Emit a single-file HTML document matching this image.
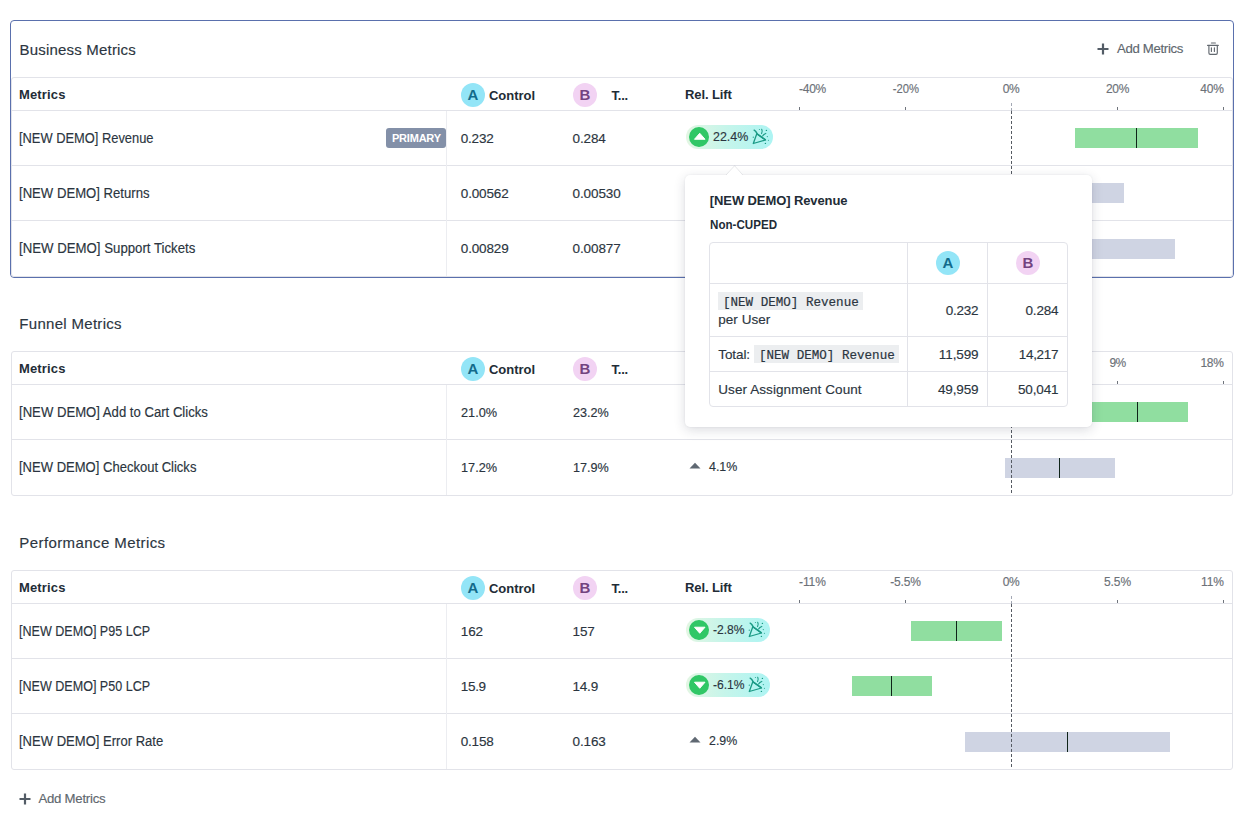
<!DOCTYPE html>
<html><head><meta charset="utf-8"><style>
html,body{margin:0;padding:0;background:#fff;}
body{width:1246px;height:830px;overflow:hidden;position:relative;font-family:"Liberation Sans",sans-serif;}
.t{position:absolute;line-height:1;white-space:nowrap;-webkit-text-stroke:0.15px currentColor;}
.a{position:absolute;box-sizing:border-box;}
svg{position:absolute;overflow:visible;}
</style></head><body>
<div class="a" style="left:10px;top:20px;width:1224px;height:258px;border:1px solid #5a70ad;border-radius:4px;"></div>
<div class="t" style="top:42.00px;font-size:15px;color:#2c3641;letter-spacing:0.196px;left:19.5px;">Business Metrics</div>
<svg style="left:1097px;top:43px" width="12" height="12" viewBox="0 0 12 12"><path d="M6 0.5 V11.5 M0.5 6 H11.5" stroke="#535c66" stroke-width="2.2"/></svg>
<div class="t" style="top:41.82px;font-size:13.2px;color:#60676e;letter-spacing:-0.311px;left:1116.9px;">Add Metrics</div>
<svg style="left:1206px;top:41px" width="14" height="14" viewBox="0 0 14 14"><path d="M5.4 2 H9.4 M1.6 4.4 H12.3 M2.9 4.6 V12 Q2.9 13.3 4.2 13.3 H10 Q11.3 13.3 11.3 12 V4.6 M5.4 6.7 V10.4 M8.4 6.7 V10.4" fill="none" stroke="#62686f" stroke-width="1.15" stroke-linecap="round"/></svg>
<div class="a" style="left:11px;top:77px;width:1222px;height:200px;border:1px solid #e2e3e9;border-radius:3px;"></div>
<div class="a" style="left:11px;top:110px;width:1222px;height:1px;background:#e2e3e9;"></div>
<div class="a" style="left:11px;top:165px;width:1222px;height:1px;background:#e2e3e9;"></div>
<div class="a" style="left:11px;top:220px;width:1222px;height:1px;background:#e2e3e9;"></div>
<div class="a" style="left:446px;top:111px;width:1px;height:165px;background:#ecedf1;"></div>
<div class="t" style="top:87.99px;font-size:13px;color:#222c36;font-weight:700;-webkit-text-stroke:0;letter-spacing:0.14px;left:19px;">Metrics</div>
<div class="a" style="left:461px;top:83px;width:24px;height:24px;border-radius:50%;background:#93e5f7;"></div>
<div class="t" style="top:87.10px;font-size:15px;color:#136b8b;font-weight:700;-webkit-text-stroke:0;left:273px;width:400px;text-align:center;">A</div>
<div class="t" style="top:89.29px;font-size:13px;color:#222c36;font-weight:700;-webkit-text-stroke:0;letter-spacing:-0.03px;left:489px;">Control</div>
<div class="a" style="left:573px;top:83px;width:24px;height:24px;border-radius:50%;background:#f2d3f3;"></div>
<div class="t" style="top:87.10px;font-size:15px;color:#734380;font-weight:700;-webkit-text-stroke:0;left:385px;width:400px;text-align:center;">B</div>
<div class="t" style="top:89.29px;font-size:13px;color:#222c36;font-weight:700;-webkit-text-stroke:0;letter-spacing:-0.209px;left:611.5px;">T...</div>
<div class="t" style="top:87.99px;font-size:13px;color:#222c36;font-weight:700;-webkit-text-stroke:0;letter-spacing:-0.096px;left:685px;">Rel. Lift</div>
<div class="t" style="top:82.84px;font-size:12px;color:#6c7178;letter-spacing:-0.253px;left:799px;">-40%</div>
<div class="t" style="top:82.84px;font-size:12px;color:#6c7178;left:705.5px;width:400px;text-align:center;transform:scaleX(0.9388);transform-origin:center top;">-20%</div>
<div class="t" style="top:82.84px;font-size:12px;color:#6c7178;letter-spacing:-0.322px;left:811px;width:400px;text-align:center;">0%</div>
<div class="t" style="top:82.84px;font-size:12px;color:#6c7178;letter-spacing:-0.339px;left:917.5px;width:400px;text-align:center;">20%</div>
<div class="t" style="top:82.84px;font-size:12px;color:#6c7178;letter-spacing:-0.106px;right:22.106px;">40%</div>
<div class="a" style="left:799px;top:107px;width:1px;height:3px;background:#6f747c;"></div>
<div class="a" style="left:905px;top:107px;width:1px;height:3px;background:#6f747c;"></div>
<div class="a" style="left:1117px;top:107px;width:1px;height:3px;background:#6f747c;"></div>
<div class="a" style="left:1223px;top:107px;width:1px;height:3px;background:#6f747c;"></div>
<div class="t" style="top:131.14px;font-size:14px;color:#2b3540;left:19px;transform:scaleX(0.9196);transform-origin:left top;">[NEW DEMO] Revenue</div>
<div class="t" style="top:131.57px;font-size:13.5px;color:#2b3540;letter-spacing:-0.217px;left:460.8px;">0.232</div>
<div class="t" style="top:131.57px;font-size:13.5px;color:#2b3540;letter-spacing:-0.157px;left:572.6px;">0.284</div>
<div class="a" style="left:685.5px;top:125px;width:87.5px;height:23.5px;border-radius:12px;background:linear-gradient(to right,#e3f6e3,#c6f5ea 45%,#adf4f3);"></div>
<div class="a" style="left:689.2px;top:127px;width:19.8px;height:19.8px;border-radius:50%;background:#30c766;"></div>
<svg style="left:689.5px;top:127.2px" width="19.5" height="19.5" viewBox="0 0 20 20"><path d="M4.6 12.6 L10 6.4 L15.4 12.6 Z" fill="#fff" stroke="#fff" stroke-width="1" stroke-linejoin="round"/></svg>
<div class="t" style="top:130.37px;font-size:13.5px;color:#2b3540;left:712.9px;transform:scaleX(0.9222);transform-origin:left top;">22.4%</div>
<svg style="left:748.9px;top:125px" width="24" height="24" viewBox="0 0 24 24"><path d="M4.3 18.5 L7.8 8.8 L16.5 15 Z" fill="none" stroke="#1a9a85" stroke-width="1.3" stroke-linejoin="round"/><path d="M5.2 5.2 Q6.9 6.1 8.2 8.9 M8.4 9.2 L16.2 14.6" fill="none" stroke="#1a9a85" stroke-width="1.5" stroke-linecap="round"/><path d="M12.7 4.3 Q13.8 6.2 12.6 8.6" fill="none" stroke="#1a9a85" stroke-width="1.1" stroke-linecap="round"/><path d="M16.8 8.4 Q14.6 9.1 13.6 10.9" fill="none" stroke="#1a9a85" stroke-width="1.1" stroke-linecap="round"/><circle cx="17.4" cy="5.4" r=".7" fill="#1a9a85"/><circle cx="4.3" cy="12.2" r=".6" fill="#1a9a85"/><circle cx="18.3" cy="11.6" r=".55" fill="#1a9a85"/><circle cx="19.4" cy="15.3" r=".55" fill="#1a9a85"/><circle cx="16.4" cy="18.4" r=".7" fill="#1a9a85"/><circle cx="10.4" cy="4.4" r=".5" fill="#1a9a85"/></svg>
<div class="a" style="left:1075px;top:128px;width:123px;height:20px;background:#90dea0;"></div>
<div class="a" style="left:1136px;top:128px;width:1px;height:20px;background:#0f2419;"></div>
<div class="t" style="top:186.14px;font-size:14px;color:#2b3540;left:19px;transform:scaleX(0.9372);transform-origin:left top;">[NEW DEMO] Returns</div>
<div class="t" style="top:186.57px;font-size:13.5px;color:#2b3540;letter-spacing:-0.157px;left:460.8px;">0.00562</div>
<div class="t" style="top:186.57px;font-size:13.5px;color:#2b3540;letter-spacing:-0.114px;left:572.6px;">0.00530</div>
<div class="a" style="left:1011px;top:183px;width:113px;height:20px;background:#cfd4e3;"></div>
<div class="a" style="left:1050px;top:183px;width:1px;height:20px;background:#0f2419;"></div>
<div class="t" style="top:241.14px;font-size:14px;color:#2b3540;left:19px;transform:scaleX(0.9446);transform-origin:left top;">[NEW DEMO] Support Tickets</div>
<div class="t" style="top:241.57px;font-size:13.5px;color:#2b3540;letter-spacing:-0.157px;left:460.8px;">0.00829</div>
<div class="t" style="top:241.57px;font-size:13.5px;color:#2b3540;letter-spacing:-0.114px;left:572.6px;">0.00877</div>
<div class="a" style="left:1011px;top:239px;width:164px;height:20px;background:#cfd4e3;"></div>
<div class="a" style="left:1050px;top:239px;width:1px;height:20px;background:#0f2419;"></div>
<div class="a" style="left:1011px;top:103px;width:1px;height:8px;background:repeating-linear-gradient(to bottom,#a3a8b4 0,#a3a8b4 3px,transparent 3px,transparent 5px);"></div>
<div class="a" style="left:1011px;top:111px;width:1px;height:165px;background:repeating-linear-gradient(to bottom,#565b63 0,#565b63 3px,transparent 3px,transparent 5px);"></div>
<div class="a" style="left:386px;top:128px;width:60px;height:20px;border-radius:3px;background:#8390a8;"></div>
<div class="t" style="top:132.69px;font-size:11px;color:#ffffff;font-weight:700;-webkit-text-stroke:0;letter-spacing:-0.217px;left:392px;">PRIMARY</div>
<div class="t" style="top:316.20px;font-size:15px;color:#2c3641;letter-spacing:0.303px;left:19.3px;">Funnel Metrics</div>
<div class="a" style="left:11px;top:351px;width:1222px;height:145px;border:1px solid #e2e3e9;border-radius:3px;"></div>
<div class="a" style="left:11px;top:384px;width:1222px;height:1px;background:#e2e3e9;"></div>
<div class="a" style="left:11px;top:439px;width:1222px;height:1px;background:#e2e3e9;"></div>
<div class="a" style="left:446px;top:385px;width:1px;height:110px;background:#ecedf1;"></div>
<div class="t" style="top:361.99px;font-size:13px;color:#222c36;font-weight:700;-webkit-text-stroke:0;letter-spacing:0.14px;left:19px;">Metrics</div>
<div class="a" style="left:461px;top:357px;width:24px;height:24px;border-radius:50%;background:#93e5f7;"></div>
<div class="t" style="top:361.10px;font-size:15px;color:#136b8b;font-weight:700;-webkit-text-stroke:0;left:273px;width:400px;text-align:center;">A</div>
<div class="t" style="top:363.29px;font-size:13px;color:#222c36;font-weight:700;-webkit-text-stroke:0;letter-spacing:-0.03px;left:489px;">Control</div>
<div class="a" style="left:573px;top:357px;width:24px;height:24px;border-radius:50%;background:#f2d3f3;"></div>
<div class="t" style="top:361.10px;font-size:15px;color:#734380;font-weight:700;-webkit-text-stroke:0;left:385px;width:400px;text-align:center;">B</div>
<div class="t" style="top:363.29px;font-size:13px;color:#222c36;font-weight:700;-webkit-text-stroke:0;letter-spacing:-0.209px;left:611.5px;">T...</div>
<div class="t" style="top:361.99px;font-size:13px;color:#222c36;font-weight:700;-webkit-text-stroke:0;letter-spacing:-0.096px;left:685px;">Rel. Lift</div>
<div class="t" style="top:356.84px;font-size:12px;color:#6c7178;letter-spacing:-0.253px;left:799px;">-18%</div>
<div class="t" style="top:356.84px;font-size:12px;color:#6c7178;left:705.5px;width:400px;text-align:center;transform:scaleX(0.9372);transform-origin:center top;">-9%</div>
<div class="t" style="top:356.84px;font-size:12px;color:#6c7178;letter-spacing:-0.322px;left:811px;width:400px;text-align:center;">0%</div>
<div class="t" style="top:356.84px;font-size:12px;color:#6c7178;letter-spacing:-0.622px;left:917.5px;width:400px;text-align:center;">9%</div>
<div class="t" style="top:356.84px;font-size:12px;color:#6c7178;letter-spacing:-0.206px;right:22.206px;">18%</div>
<div class="a" style="left:799px;top:381px;width:1px;height:3px;background:#6f747c;"></div>
<div class="a" style="left:905px;top:381px;width:1px;height:3px;background:#6f747c;"></div>
<div class="a" style="left:1117px;top:381px;width:1px;height:3px;background:#6f747c;"></div>
<div class="a" style="left:1223px;top:381px;width:1px;height:3px;background:#6f747c;"></div>
<div class="t" style="top:405.14px;font-size:14px;color:#2b3540;left:19px;transform:scaleX(0.9374);transform-origin:left top;">[NEW DEMO] Add to Cart Clicks</div>
<div class="t" style="top:405.57px;font-size:13.5px;color:#2b3540;left:460.8px;transform:scaleX(0.9431);transform-origin:left top;">21.0%</div>
<div class="t" style="top:405.57px;font-size:13.5px;color:#2b3540;left:572.6px;transform:scaleX(0.9352);transform-origin:left top;">23.2%</div>
<div class="a" style="left:1011px;top:402px;width:177px;height:20px;background:#90dea0;"></div>
<div class="a" style="left:1137px;top:402px;width:1px;height:20px;background:#0f2419;"></div>
<div class="t" style="top:460.14px;font-size:14px;color:#2b3540;left:19px;transform:scaleX(0.9308);transform-origin:left top;">[NEW DEMO] Checkout Clicks</div>
<div class="t" style="top:460.57px;font-size:13.5px;color:#2b3540;left:460.8px;transform:scaleX(0.9431);transform-origin:left top;">17.2%</div>
<div class="t" style="top:460.57px;font-size:13.5px;color:#2b3540;left:572.6px;transform:scaleX(0.9352);transform-origin:left top;">17.9%</div>
<svg style="left:689px;top:461.5px" width="12" height="7" viewBox="0 0 12 7"><path d="M0.5 6.5 L6 0.7 L11.5 6.5 Z" fill="#5f6872"/></svg>
<div class="t" style="top:459.57px;font-size:13.5px;color:#2b3540;left:708.8px;transform:scaleX(0.9197);transform-origin:left top;">4.1%</div>
<div class="a" style="left:1005px;top:458px;width:110px;height:20px;background:#cfd4e3;"></div>
<div class="a" style="left:1059px;top:458px;width:1px;height:20px;background:#0f2419;"></div>
<div class="a" style="left:1011px;top:377px;width:1px;height:8px;background:repeating-linear-gradient(to bottom,#a3a8b4 0,#a3a8b4 3px,transparent 3px,transparent 5px);"></div>
<div class="a" style="left:1011px;top:385px;width:1px;height:110px;background:repeating-linear-gradient(to bottom,#565b63 0,#565b63 3px,transparent 3px,transparent 5px);"></div>
<div class="t" style="top:535.30px;font-size:15px;color:#2c3641;letter-spacing:0.412px;left:19.3px;">Performance Metrics</div>
<div class="a" style="left:11px;top:570px;width:1222px;height:200px;border:1px solid #e2e3e9;border-radius:3px;"></div>
<div class="a" style="left:11px;top:603px;width:1222px;height:1px;background:#e2e3e9;"></div>
<div class="a" style="left:11px;top:658px;width:1222px;height:1px;background:#e2e3e9;"></div>
<div class="a" style="left:11px;top:713px;width:1222px;height:1px;background:#e2e3e9;"></div>
<div class="a" style="left:446px;top:604px;width:1px;height:165px;background:#ecedf1;"></div>
<div class="t" style="top:580.99px;font-size:13px;color:#222c36;font-weight:700;-webkit-text-stroke:0;letter-spacing:0.14px;left:19px;">Metrics</div>
<div class="a" style="left:461px;top:576px;width:24px;height:24px;border-radius:50%;background:#93e5f7;"></div>
<div class="t" style="top:580.10px;font-size:15px;color:#136b8b;font-weight:700;-webkit-text-stroke:0;left:273px;width:400px;text-align:center;">A</div>
<div class="t" style="top:582.29px;font-size:13px;color:#222c36;font-weight:700;-webkit-text-stroke:0;letter-spacing:-0.03px;left:489px;">Control</div>
<div class="a" style="left:573px;top:576px;width:24px;height:24px;border-radius:50%;background:#f2d3f3;"></div>
<div class="t" style="top:580.10px;font-size:15px;color:#734380;font-weight:700;-webkit-text-stroke:0;left:385px;width:400px;text-align:center;">B</div>
<div class="t" style="top:582.29px;font-size:13px;color:#222c36;font-weight:700;-webkit-text-stroke:0;letter-spacing:-0.209px;left:611.5px;">T...</div>
<div class="t" style="top:580.99px;font-size:13px;color:#222c36;font-weight:700;-webkit-text-stroke:0;letter-spacing:-0.096px;left:685px;">Rel. Lift</div>
<div class="t" style="top:575.84px;font-size:12px;color:#6c7178;letter-spacing:-0.106px;left:799px;">-11%</div>
<div class="t" style="top:575.84px;font-size:12px;color:#6c7178;letter-spacing:-0.19px;left:705.5px;width:400px;text-align:center;">-5.5%</div>
<div class="t" style="top:575.84px;font-size:12px;color:#6c7178;letter-spacing:-0.422px;left:811px;width:400px;text-align:center;">0%</div>
<div class="t" style="top:575.84px;font-size:12px;color:#6c7178;letter-spacing:-0.088px;left:917.5px;width:400px;text-align:center;">5.5%</div>
<div class="t" style="top:575.84px;font-size:12px;color:#6c7178;letter-spacing:-0.042px;right:22.042px;">11%</div>
<div class="a" style="left:799px;top:600px;width:1px;height:3px;background:#6f747c;"></div>
<div class="a" style="left:905px;top:600px;width:1px;height:3px;background:#6f747c;"></div>
<div class="a" style="left:1117px;top:600px;width:1px;height:3px;background:#6f747c;"></div>
<div class="a" style="left:1223px;top:600px;width:1px;height:3px;background:#6f747c;"></div>
<div class="t" style="top:624.14px;font-size:14px;color:#2b3540;left:19px;transform:scaleX(0.8964);transform-origin:left top;">[NEW DEMO] P95 LCP</div>
<div class="t" style="top:624.57px;font-size:13.5px;color:#2b3540;letter-spacing:-0.175px;left:460.8px;">162</div>
<div class="t" style="top:624.57px;font-size:13.5px;color:#2b3540;letter-spacing:-0.208px;left:572.6px;">157</div>
<div class="a" style="left:685.5px;top:618px;width:84.5px;height:23.5px;border-radius:12px;background:linear-gradient(to right,#e3f6e3,#c6f5ea 45%,#adf4f3);"></div>
<div class="a" style="left:689.2px;top:620px;width:19.8px;height:19.8px;border-radius:50%;background:#30c766;"></div>
<svg style="left:689.5px;top:620.2px" width="19.5" height="19.5" viewBox="0 0 20 20"><path d="M4.6 7.4 L10 13.6 L15.4 7.4 Z" fill="#fff" stroke="#fff" stroke-width="1" stroke-linejoin="round"/></svg>
<div class="t" style="top:623.37px;font-size:13.5px;color:#2b3540;left:712.9px;transform:scaleX(0.896);transform-origin:left top;">-2.8%</div>
<svg style="left:745.2px;top:618px" width="24" height="24" viewBox="0 0 24 24"><path d="M4.3 18.5 L7.8 8.8 L16.5 15 Z" fill="none" stroke="#1a9a85" stroke-width="1.3" stroke-linejoin="round"/><path d="M5.2 5.2 Q6.9 6.1 8.2 8.9 M8.4 9.2 L16.2 14.6" fill="none" stroke="#1a9a85" stroke-width="1.5" stroke-linecap="round"/><path d="M12.7 4.3 Q13.8 6.2 12.6 8.6" fill="none" stroke="#1a9a85" stroke-width="1.1" stroke-linecap="round"/><path d="M16.8 8.4 Q14.6 9.1 13.6 10.9" fill="none" stroke="#1a9a85" stroke-width="1.1" stroke-linecap="round"/><circle cx="17.4" cy="5.4" r=".7" fill="#1a9a85"/><circle cx="4.3" cy="12.2" r=".6" fill="#1a9a85"/><circle cx="18.3" cy="11.6" r=".55" fill="#1a9a85"/><circle cx="19.4" cy="15.3" r=".55" fill="#1a9a85"/><circle cx="16.4" cy="18.4" r=".7" fill="#1a9a85"/><circle cx="10.4" cy="4.4" r=".5" fill="#1a9a85"/></svg>
<div class="a" style="left:911px;top:621px;width:91px;height:20px;background:#90dea0;"></div>
<div class="a" style="left:956px;top:621px;width:1px;height:20px;background:#0f2419;"></div>
<div class="t" style="top:679.14px;font-size:14px;color:#2b3540;left:19px;transform:scaleX(0.8964);transform-origin:left top;">[NEW DEMO] P50 LCP</div>
<div class="t" style="top:679.57px;font-size:13.5px;color:#2b3540;letter-spacing:-0.319px;left:460.8px;">15.9</div>
<div class="t" style="top:679.57px;font-size:13.5px;color:#2b3540;letter-spacing:-0.244px;left:572.6px;">14.9</div>
<div class="a" style="left:685.5px;top:673px;width:84.5px;height:23.5px;border-radius:12px;background:linear-gradient(to right,#e3f6e3,#c6f5ea 45%,#adf4f3);"></div>
<div class="a" style="left:689.2px;top:675px;width:19.8px;height:19.8px;border-radius:50%;background:#30c766;"></div>
<svg style="left:689.5px;top:675.2px" width="19.5" height="19.5" viewBox="0 0 20 20"><path d="M4.6 7.4 L10 13.6 L15.4 7.4 Z" fill="#fff" stroke="#fff" stroke-width="1" stroke-linejoin="round"/></svg>
<div class="t" style="top:678.37px;font-size:13.5px;color:#2b3540;left:712.9px;transform:scaleX(0.896);transform-origin:left top;">-6.1%</div>
<svg style="left:745.2px;top:673px" width="24" height="24" viewBox="0 0 24 24"><path d="M4.3 18.5 L7.8 8.8 L16.5 15 Z" fill="none" stroke="#1a9a85" stroke-width="1.3" stroke-linejoin="round"/><path d="M5.2 5.2 Q6.9 6.1 8.2 8.9 M8.4 9.2 L16.2 14.6" fill="none" stroke="#1a9a85" stroke-width="1.5" stroke-linecap="round"/><path d="M12.7 4.3 Q13.8 6.2 12.6 8.6" fill="none" stroke="#1a9a85" stroke-width="1.1" stroke-linecap="round"/><path d="M16.8 8.4 Q14.6 9.1 13.6 10.9" fill="none" stroke="#1a9a85" stroke-width="1.1" stroke-linecap="round"/><circle cx="17.4" cy="5.4" r=".7" fill="#1a9a85"/><circle cx="4.3" cy="12.2" r=".6" fill="#1a9a85"/><circle cx="18.3" cy="11.6" r=".55" fill="#1a9a85"/><circle cx="19.4" cy="15.3" r=".55" fill="#1a9a85"/><circle cx="16.4" cy="18.4" r=".7" fill="#1a9a85"/><circle cx="10.4" cy="4.4" r=".5" fill="#1a9a85"/></svg>
<div class="a" style="left:852px;top:676px;width:80px;height:20px;background:#90dea0;"></div>
<div class="a" style="left:891px;top:676px;width:1px;height:20px;background:#0f2419;"></div>
<div class="t" style="top:734.14px;font-size:14px;color:#2b3540;left:19px;transform:scaleX(0.9316);transform-origin:left top;">[NEW DEMO] Error Rate</div>
<div class="t" style="top:734.57px;font-size:13.5px;color:#2b3540;letter-spacing:-0.217px;left:460.8px;">0.158</div>
<div class="t" style="top:734.57px;font-size:13.5px;color:#2b3540;letter-spacing:-0.157px;left:572.6px;">0.163</div>
<svg style="left:689px;top:735.5px" width="12" height="7" viewBox="0 0 12 7"><path d="M0.5 6.5 L6 0.7 L11.5 6.5 Z" fill="#5f6872"/></svg>
<div class="t" style="top:733.57px;font-size:13.5px;color:#2b3540;left:708.8px;transform:scaleX(0.9165);transform-origin:left top;">2.9%</div>
<div class="a" style="left:965px;top:732px;width:205px;height:20px;background:#cfd4e3;"></div>
<div class="a" style="left:1067px;top:732px;width:1px;height:20px;background:#0f2419;"></div>
<div class="a" style="left:1011px;top:596px;width:1px;height:8px;background:repeating-linear-gradient(to bottom,#a3a8b4 0,#a3a8b4 3px,transparent 3px,transparent 5px);"></div>
<div class="a" style="left:1011px;top:604px;width:1px;height:165px;background:repeating-linear-gradient(to bottom,#565b63 0,#565b63 3px,transparent 3px,transparent 5px);"></div>
<svg style="left:19px;top:792.5px" width="12" height="12" viewBox="0 0 12 12"><path d="M6 0.5 V11.5 M0.5 6 H11.5" stroke="#535c66" stroke-width="2.2"/></svg>
<div class="t" style="top:791.82px;font-size:13.2px;color:#60676e;letter-spacing:-0.256px;left:38.5px;">Add Metrics</div>
<div class="a" style="left:685px;top:175px;width:407px;height:252px;background:#fff;border-radius:5px;box-shadow:0 3px 12px rgba(30,40,60,0.16),0 0 2px rgba(30,40,60,0.08);"></div>
<svg style="left:724px;top:164px" width="22" height="12" viewBox="0 0 22 12"><path d="M1.6 11.5 L10.6 1.7 L19.2 11.5 Z" fill="#fff" stroke="rgba(30,40,60,0.10)" stroke-width="1"/><rect x="0" y="11" width="22" height="2" fill="#fff"/></svg>
<div class="t" style="top:194.19px;font-size:13px;color:#222c36;font-weight:700;-webkit-text-stroke:0;letter-spacing:-0.1px;left:709.8px;">[NEW DEMO] Revenue</div>
<div class="t" style="top:219.41px;font-size:12.5px;color:#222c36;font-weight:700;-webkit-text-stroke:0;left:709.8px;transform:scaleX(0.9278);transform-origin:left top;">Non-CUPED</div>
<div class="a" style="left:709px;top:242px;width:359px;height:165px;border:1px solid #e2e3e9;border-radius:4px;"></div>
<div class="a" style="left:709px;top:283px;width:359px;height:1px;background:#e2e3e9;"></div>
<div class="a" style="left:709px;top:336px;width:359px;height:1px;background:#e2e3e9;"></div>
<div class="a" style="left:709px;top:371px;width:359px;height:1px;background:#e2e3e9;"></div>
<div class="a" style="left:907px;top:242px;width:1px;height:165px;background:#e2e3e9;"></div>
<div class="a" style="left:987px;top:242px;width:1px;height:165px;background:#e2e3e9;"></div>
<div class="a" style="left:936px;top:251px;width:24px;height:24px;border-radius:50%;background:#93e5f7;"></div>
<div class="t" style="top:255.10px;font-size:15px;color:#136b8b;font-weight:700;-webkit-text-stroke:0;left:748px;width:400px;text-align:center;">A</div>
<div class="a" style="left:1016px;top:251px;width:24px;height:24px;border-radius:50%;background:#f2d3f3;"></div>
<div class="t" style="top:255.10px;font-size:15px;color:#734380;font-weight:700;-webkit-text-stroke:0;left:828px;width:400px;text-align:center;">B</div>
<div class="a" style="left:718px;top:292px;width:145px;height:18px;background:#eceef0;"></div>
<div class="t" style="top:296.38px;font-size:13.6px;color:#2b3540;font-family:'Liberation Mono', monospace;-webkit-text-stroke:0;left:723px;transform:scaleX(0.9242);transform-origin:left top;-webkit-text-stroke:0.2px currentColor;">[NEW DEMO] Revenue</div>
<div class="t" style="top:312.57px;font-size:13.5px;color:#2b3540;letter-spacing:0.017px;left:718.3px;">per User</div>
<div class="t" style="top:304.07px;font-size:13.5px;color:#2b3540;letter-spacing:-0.217px;right:267.61699999999996px;">0.232</div>
<div class="t" style="top:304.07px;font-size:13.5px;color:#2b3540;letter-spacing:-0.157px;right:187.5570000000001px;">0.284</div>
<div class="t" style="top:347.57px;font-size:13.5px;color:#2b3540;letter-spacing:-0.094px;left:718.3px;">Total:</div>
<div class="a" style="left:754px;top:345px;width:145px;height:18px;background:#eceef0;"></div>
<div class="t" style="top:348.88px;font-size:13.6px;color:#2b3540;font-family:'Liberation Mono', monospace;-webkit-text-stroke:0;left:759px;transform:scaleX(0.9242);transform-origin:left top;-webkit-text-stroke:0.2px currentColor;">[NEW DEMO] Revenue</div>
<div class="t" style="top:348.07px;font-size:13.5px;color:#2b3540;letter-spacing:-0.098px;right:267.498px;">11,599</div>
<div class="t" style="top:348.07px;font-size:13.5px;color:#2b3540;letter-spacing:-0.265px;right:187.66500000000008px;">14,217</div>
<div class="t" style="top:383.17px;font-size:13.5px;color:#2b3540;letter-spacing:0.073px;left:718.3px;">User Assignment Count</div>
<div class="t" style="top:382.87px;font-size:13.5px;color:#2b3540;letter-spacing:-0.132px;right:267.532px;">49,959</div>
<div class="t" style="top:382.87px;font-size:13.5px;color:#2b3540;letter-spacing:-0.132px;right:187.5320000000001px;">50,041</div>
</body></html>
